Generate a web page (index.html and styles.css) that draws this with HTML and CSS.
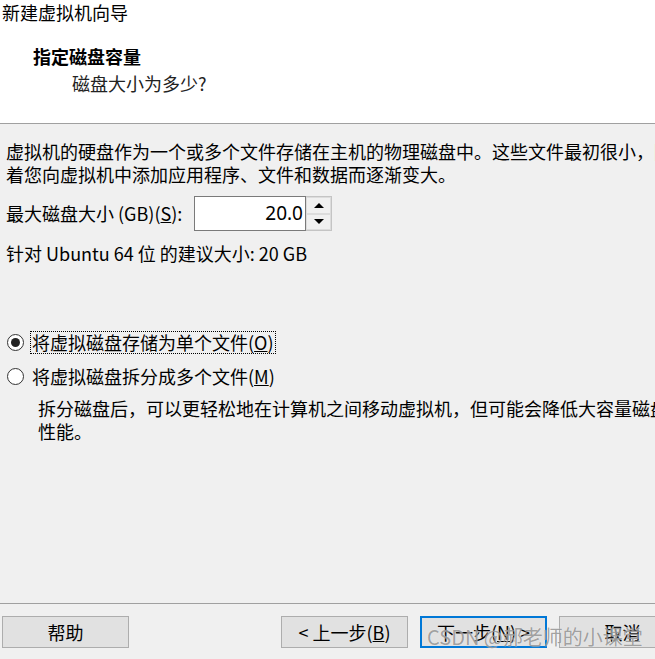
FILE: index.html
```html
<!DOCTYPE html>
<html lang="zh-CN">
<head>
    <meta charset="UTF-8">
    <meta name="viewport" content="width=device-width, initial-scale=1.0">
    <title>新建虚拟机向导</title>
    <link rel="stylesheet" href="styles.css">
</head>
<body>
    <div class="wizard">
        <div class="top">
            <div class="title">新建虚拟机向导</div>
            <div class="step-title">指定磁盘容量</div>
            <div class="step-sub">磁盘大小为多少?</div>
        </div>

        <div class="content">
            <p class="intro">虚拟机的硬盘作为一个或多个文件存储在主机的物理磁盘中。这些文件最初很小，随<br>着您向虚拟机中添加应用程序、文件和数据而逐渐变大。</p>

            <div class="size-row">
                <label class="size-label">最大磁盘大小 (GB)(<u>S</u>):</label>
                <div class="spin">
                    <div class="spin-value">20.0</div>
                    <div class="spin-btns">
                        <div class="spin-btn"><span class="arrow-up"></span></div>
                        <div class="spin-btn"><span class="arrow-down"></span></div>
                    </div>
                </div>
            </div>

            <div class="recommend">针对 Ubuntu 64 位 的建议大小: 20 GB</div>

            <div class="radio-row first">
                <span class="radio checked"></span>
                <span class="radio-label focused">将虚拟磁盘存储为单个文件(<u>O</u>)</span>
            </div>
            <div class="radio-row">
                <span class="radio"></span>
                <span class="radio-label">将虚拟磁盘拆分成多个文件(<u>M</u>)</span>
            </div>
            <p class="note">拆分磁盘后，可以更轻松地在计算机之间移动虚拟机，但可能会降低大容量磁盘的<br>性能。</p>
        </div>

        <div class="footer">
            <button class="btn">帮助</button>
            <div class="spacer"></div>
            <button class="btn">&lt; 上一步(<u>B</u>)</button>
            <button class="btn default">下一步(<u>N</u>) &gt;</button>
            <button class="btn">取消</button>
        </div>

        <div class="watermark">CSDN @郝老师的小课堂</div>
    </div>
</body>
</html>
```

FILE: styles.css
```css
* {
    margin: 0;
    padding: 0;
    box-sizing: border-box;
}

body {
    width: 655px;
    height: 659px;
    overflow: hidden;
    background: #f0f0f0;
    font-family: "Noto Sans CJK SC", "Noto Sans", sans-serif;
    font-size: 18px;
    color: #000;
}

.wizard {
    position: relative;
    display: flex;
    flex-direction: column;
    height: 659px;
    overflow: hidden;
}

/* cabecera blanca */
.top {
    height: 124px;
    background: #fff;
    border-bottom: 1px solid #a0a0a0;
    padding-left: 2px;
}

.title {
    line-height: 24px;
}

.step-title {
    margin-top: 21px;
    padding-left: 31px;
    font-weight: bold;
    line-height: 23px;
}

.step-sub {
    margin-top: 4px;
    padding-left: 70px;
    line-height: 23px;
    color: #222;
}

.content {
    flex: 1;
    padding: 16px 0 0 6px;
    white-space: nowrap;
}

.intro {
    line-height: 23px;
}

.size-row {
    display: flex;
    align-items: center;
    margin-top: 10px;
    height: 35px;
}

.size-label {
    width: 188px;
    line-height: 23px;
}

.spin {
    display: flex;
    height: 35px;
}

.spin-value {
    width: 112px;
    height: 35px;
    background: #fff;
    border: 1px solid #7a7a7a;
    text-align: right;
    padding-right: 2px;
    line-height: 33px;
    font-family: "Noto Sans", sans-serif;
    font-size: 19px;
}

.spin-btns {
    display: flex;
    flex-direction: column;
    width: 26px;
    height: 35px;
    border: 1px solid #c4c4c4;
    border-left: none;
}

.spin-btn {
    flex: 1;
    display: flex;
    align-items: center;
    justify-content: center;
    background: #f0f0f0;
    border: 1px solid #dcdcdc;
}

.arrow-up,
.arrow-down {
    width: 0;
    height: 0;
    border-left: 5px solid transparent;
    border-right: 5px solid transparent;
}

.arrow-up {
    border-bottom: 5px solid #000;
}

.arrow-down {
    border-top: 5px solid #000;
}

.recommend {
    margin-top: 11px;
    line-height: 23px;
}

.radio-row {
    display: flex;
    align-items: center;
    height: 23px;
    margin-top: 11px;
    margin-left: 1px;
}

.radio-row.first {
    margin-top: 66px;
}

.radio {
    width: 17px;
    height: 17px;
    border: 1px solid #333;
    border-radius: 50%;
    background: #fff;
    display: flex;
    align-items: center;
    justify-content: center;
    margin-right: 6px;
}

.radio.checked::after {
    content: "";
    width: 9px;
    height: 9px;
    border-radius: 50%;
    background: #222;
}

.radio-label {
    line-height: 21px;
    padding: 0 1px;
    border: 1px dotted transparent;
}

.radio-label.focused {
    border-color: #000;
}

.note {
    margin-top: 9px;
    padding-left: 32px;
    line-height: 23px;
}

.footer {
    display: flex;
    align-items: flex-start;
    height: 56px;
    border-top: 1px solid #a0a0a0;
    padding: 12px 0 0 2px;
}

.spacer {
    width: 140px;
    flex-shrink: 0;
}

.btn {
    width: 127px;
    height: 32px;
    background: #e1e1e1;
    border: 1px solid #adadad;
    font-family: "Noto Sans CJK SC", "Noto Sans", sans-serif;
    font-size: 18px;
    color: #000;
    margin-right: 12px;
    flex-shrink: 0;
    line-height: 28px;
}

.btn.default {
    border: 2px solid #0078d7;
}

.watermark {
    position: absolute;
    left: 427px;
    top: 622px;
    font-size: 20px;
    line-height: 30px;
    color: rgba(110, 110, 110, 0.65);
    white-space: nowrap;
    text-shadow: 0 0 1px rgba(255, 255, 255, 0.8);
}
```
